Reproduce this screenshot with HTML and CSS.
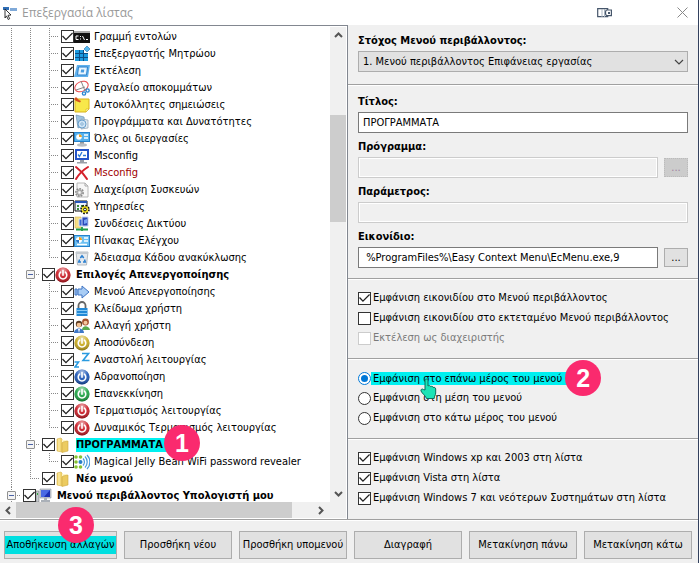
FILE: index.html
```html
<!DOCTYPE html>
<html lang="el">
  <head>
    <meta charset="UTF-8" />
    <meta name="viewport" content="width=device-width, initial-scale=1.0" />
    <title>Επεξεργασία λίστας</title>
    <link rel="stylesheet" href="styles.css">
  </head>
  <body>
    <!-- shared icons -->
    <svg class="defs" width="0" height="0">
      <defs>
        <radialGradient id="shine" cx="50%" cy="20%" r="80%">
          <stop offset="0" stop-color="#fff" stop-opacity="0.65" />
          <stop offset="0.5" stop-color="#fff" stop-opacity="0.1" />
          <stop offset="1" stop-color="#000" stop-opacity="0.35" />
        </radialGradient>
        <symbol id="power" viewBox="0 0 16 16">
          <circle cx="8" cy="8" r="7.6" fill="currentColor" />
          <circle cx="8" cy="8" r="7.6" fill="url(#shine)" />
          <path d="M5.6 5.2a3.8 3.8 0 1 0 4.8 0M8 3.6v4.6" fill="none" stroke="#fff" stroke-width="1.6" stroke-linecap="round" />
        </symbol>
        <symbol id="folder" viewBox="0 0 16 16">
          <path d="M2 2l4-1 1 1v13l-5-1z" fill="#f3d673" stroke="#d9b44a" stroke-width="0.6" />
          <path d="M7 3h5v11H7z" fill="#fff6c8" />
          <path d="M8 5l5-1v10l-6 1.5V6z" fill="#eccb60" stroke="#cfa940" stroke-width="0.6" />
          <path d="M4 2v12" stroke="#fbeeb0" />
        </symbol>
      </defs>
    </svg>

    <div class="window">
      <header class="titlebar">
        <svg width="16" height="16" viewBox="0 0 16 16">
          <path d="M1 2h6v3H1z" fill="#2f6db5" />
          <path d="M8 3h7v3H8z" fill="#7fa9d8" />
          <path d="M3 4l6 6-3 .3 1.7 3.4-1.5.8-1.7-3.6L3 13z" fill="#fff" stroke="#222" stroke-width="0.9" />
        </svg>
        <h1>Επεξεργασία λίστας</h1>
        <svg class="dock" width="16" height="10" viewBox="0 0 16 10">
          <path d="M.7.7h10v8H.7z" fill="#fff" stroke="#46566b" stroke-width="1.2" />
          <path d="M5 1v8M7.5 1v8" stroke="#a9b4c0" />
          <path d="M10 2h4.4v5.6H10c-2 0-2-5.6 0-5.6z" fill="#fff" stroke="#46566b" stroke-width="1.2" />
          <path d="M11 4h2v2h-2z" fill="#46566b" />
        </svg>
        <button class="close" aria-label="Κλείσιμο">
          <svg width="11" height="11" viewBox="0 0 11 11"><path d="M.5.5l10 10M10.5.5l-10 10" stroke="#888" /></svg>
        </button>
      </header>

      <main class="content">
        <section class="tree-pane">
          <div class="tree-view">
            <ul class="tree">
              <li class="hidden-row">
                <ul>
                  <li class="hidden-row">
                    <ul>
                      <li><label class="row"><input type="checkbox" checked />
                        <svg viewBox="0 0 16 16"><path d="M0 2h16v12H0z" fill="#111" /><path d="M0 2h16v2H0z" fill="#aaa" /><path d="M4.5 7H2v3.500h2.500M6.500 7v1M6.500 9.500v1M8.500 7l2 4M12 10.500h2" fill="none" stroke="#fff" /></svg>
                        <span>Γραμμή εντολών</span></label></li>
                      <li><label class="row"><input type="checkbox" checked />
                        <svg viewBox="0 0 16 16"><path d="M1 4h9v3h4v8H1z" fill="#1d9be0" /><path d="M1 7.500h13M1 11.500h13M5.500 4v11M9.500 4v11" stroke="#0b4f86" /><path d="M13 0l3 3-3 3-3-3z" fill="#58b9ee" stroke="#1a6fb0" stroke-width="0.6" /></svg>
                        <span>Επεξεργαστής Μητρώου</span></label></li>
                      <li><label class="row"><input type="checkbox" checked />
                        <svg viewBox="0 0 16 16"><path d="M3 2h13l-2 12H0z" fill="#5fb0ec" /><path d="M4.500 4h9l-1 8h-9z" fill="#d9efff" stroke="#2e82cc" /><path d="M6.500 6h4.500l-.5 4H6z" fill="#4a9de0" stroke="#fff" /></svg>
                        <span>Εκτέλεση</span></label></li>
                      <li><label class="row"><input type="checkbox" checked />
                        <svg viewBox="0 0 16 16"><ellipse cx="7.500" cy="6.500" rx="7" ry="4.800" transform="rotate(-25 7.500 6.500)" fill="#fff" stroke="#e8474a" /><path d="M7 1l4 10M2 10l9-3" stroke="#888" /><circle cx="10" cy="13.500" r="1.600" fill="none" stroke="#2a86d0" stroke-width="1.400" /><circle cx="13.600" cy="10.500" r="1.600" fill="none" stroke="#2a86d0" stroke-width="1.400" /></svg>
                        <span>Εργαλείο αποκομμάτων</span></label></li>
                      <li><label class="row"><input type="checkbox" checked />
                        <svg viewBox="0 0 16 16"><path d="M1 2h14v10l-3 3H1z" fill="#f8e84a" stroke="#d8b21c" /><path d="M15 12h-3v3z" fill="#fffbc0" stroke="#d8b21c" stroke-width="0.600" /><path d="M2 0l3 3 2 1-1 1.500L2 4 0 2z" fill="#d4501e" /></svg>
                        <span>Αυτοκόλλητες σημειώσεις</span></label></li>
                      <li><label class="row"><input type="checkbox" checked />
                        <svg viewBox="0 0 16 16"><path d="M2 1l8 2 1 8-7 3z" fill="#9fc4e2" stroke="#6f93b0" stroke-width="0.700" /><path d="M7 5l7 1v8l-7 1z" fill="#e3ebf2" stroke="#8b9fb2" stroke-width="0.700" /><circle cx="8" cy="10" r="4" fill="#cfe4f5" stroke="#4f8ec2" stroke-width="0.800" /><circle cx="8" cy="10" r="1.200" fill="#fff" stroke="#4f8ec2" stroke-width="0.700" /></svg>
                        <span>Προγράμματα και Δυνατότητες</span></label></li>
                      <li><label class="row"><input type="checkbox" checked />
                        <svg viewBox="0 0 16 16"><path d="M0 1h16v10H0z" fill="#2582cc" /><path d="M1 2h14v8H1z" fill="#55b1ec" /><circle cx="5" cy="6" r="2.800" fill="#fff" /><path d="M5 6V3.200A2.800 2.800 0 0 1 7.800 6z" fill="#f0a020" /><path d="M10 4h4M10 7h4" stroke="#fff" stroke-width="1.500" /><path d="M6 11h4v2H6z" fill="#999" /><ellipse cx="8" cy="14" rx="5" ry="1.700" fill="#b8bec4" /></svg>
                        <span>Όλες οι διεργασίες</span></label></li>
                      <li><label class="row"><input type="checkbox" checked />
                        <svg viewBox="0 0 16 16"><path d="M1 1h14v11H1z" fill="#2453c8" /><path d="M3 3h10v7H3z" fill="#fff" /><path d="M4 6.500l1.500 2L8 4M9 7.500h3" fill="none" stroke="#2a78d8" stroke-width="1.300" /><path d="M6 12h4v2h3v1.500H3V14h3z" fill="#9aa0a8" /></svg>
                        <span>Msconfig</span></label></li>
                      <li><label class="row"><input type="checkbox" checked />
                        <svg viewBox="0 0 16 16"><path d="M2 2c4 3 8 7 11 12M14 2C9 5 5 9 2 14" fill="none" stroke="#d4202a" stroke-width="2" stroke-linecap="round" /></svg>
                        <span class="missing">Msconfig</span></label></li>
                      <li><label class="row"><input type="checkbox" checked />
                        <svg viewBox="0 0 16 16"><path d="M3 1h8l3 3v11H3z" fill="#f7f7f7" stroke="#a8a8a8" stroke-width="0.800" /><path d="M11 1v3h3" fill="none" stroke="#a8a8a8" /><circle cx="5.500" cy="10.500" r="3.700" fill="#ddd" stroke="#8c8c8c" stroke-width="1.600" stroke-dasharray="1.700 1.100" /><circle cx="5.500" cy="10.500" r="2.500" fill="#d0d0d0" stroke="#888" stroke-width="0.700" /><circle cx="5.500" cy="10.500" r="1" fill="#fff" /></svg>
                        <span>Διαχείριση Συσκευών</span></label></li>
                      <li><label class="row"><input type="checkbox" checked />
                        <svg viewBox="0 0 16 16"><path d="M1 2h12v10H1z" fill="#eef4ff" stroke="#111" /><path d="M1 2h12v2H1z" fill="#2554b8" /><path d="M3 6h2v2H3zM7 6h2v2H7zM3 9h2v2H3z" fill="#3a8b3a" /><circle cx="11" cy="10.500" r="3.600" fill="#f2e322" stroke="#111" stroke-width="2.400" stroke-dasharray="1.600 1.200" /><circle cx="11" cy="10.500" r="3.200" fill="#f2e322" /><circle cx="11" cy="10.500" r="1.400" fill="#fff" stroke="#111" /></svg>
                        <span>Υπηρεσίες</span></label></li>
                      <li><label class="row"><input type="checkbox" checked />
                        <svg viewBox="0 0 16 16"><path d="M1 1h6v11H1z" fill="#f5df86" stroke="#d6b64a" stroke-width="0.600" /><path d="M5 3h7v7H5z" fill="#3966d6" stroke="#d8e2f4" /><path d="M8 1h6v9H8z" fill="#2b49b8" stroke="#c6d3ee" /><path d="M10 4l3-1v4l-3 1z" fill="#7aa4f4" /><path d="M2 13.500h12M8 11v4" stroke="#1e9e4a" stroke-width="1.800" /></svg>
                        <span>Συνδέσεις Δικτύου</span></label></li>
                      <li><label class="row"><input type="checkbox" checked />
                        <svg viewBox="0 0 16 16"><path d="M0 2h16v12H0z" fill="#2582cc" /><path d="M1 3h14v10H1z" fill="#6cc0f2" /><circle cx="5" cy="7" r="3" fill="#fff" /><path d="M5 7V4a3 3 0 0 1 3 3z" fill="#f0a020" /><path d="M5 7H2a3 3 0 0 0 3 3z" fill="#2c78c8" /><path d="M10 5h4M10 8h4M3 11.500h10" stroke="#fff" stroke-width="1.300" /></svg>
                        <span>Πίνακας Ελέγχου</span></label></li>
                      <li><label class="row"><input type="checkbox" checked />
                        <svg viewBox="0 0 16 16"><path d="M2 2h12l-1.500 13h-9z" fill="#e6eaee" stroke="#a6adb4" stroke-width="0.800" /><path d="M2 2h12v2H2z" fill="#c3c9cf" /><path d="M6.300 8L8 5.800 9.800 8M10.500 9.500l.8 2.500H9M7 12H4.700l.9-2.500" fill="none" stroke="#2a7fd0" stroke-width="1.500" /></svg>
                        <span>Άδειασμα Κάδου ανακύκλωσης</span></label></li>
                    </ul>
                  </li>
                  <li>
                    <div class="row"><button class="expander" aria-label="Σύμπτυξη"></button>
                      <label><input type="checkbox" checked /><svg class="red"><use href="#power" /></svg><b>Επιλογές Απενεργοποίησης</b></label></div>
                    <ul>
                      <li><label class="row"><input type="checkbox" checked />
                        <svg viewBox="0 0 16 16"><path d="M1 5h2v6H1zM4 5h4V2l7 6-7 6v-3H4z" fill="#a9cdf5" stroke="#3f74c4" /></svg>
                        <span>Μενού Απενεργοποίησης</span></label></li>
                      <li><label class="row"><input type="checkbox" checked />
                        <svg viewBox="0 0 16 16"><path d="M4.500 8V4.500a3.500 3.500 0 0 1 7 0V8" fill="none" stroke="#666" stroke-width="1.800" /><path d="M2.500 7h11v8h-11z" fill="#2389d6" /><path d="M3 9.500h10M3 12.500h10" stroke="#8acbf4" /></svg>
                        <span>Κλείδωμα χρήστη</span></label></li>
                      <li><label class="row"><input type="checkbox" checked />
                        <svg viewBox="0 0 16 16"><circle cx="11.500" cy="4" r="3.400" fill="#a5522c" /><circle cx="11.500" cy="4.800" r="2" fill="#f4c9a0" /><path d="M8 12c0-5 7-5 8 0z" fill="#58ab4e" /><circle cx="5" cy="6" r="3.200" fill="#5a3c24" /><circle cx="5" cy="7" r="2.300" fill="#f2c294" /><path d="M0 15c0-6 10-6 10 0z" fill="#3f78c8" /><path d="M4 11h2l-1 4z" fill="#fff" /></svg>
                        <span>Αλλαγή χρήστη</span></label></li>
                      <li><label class="row"><input type="checkbox" checked /><svg class="gold"><use href="#power" /></svg><span>Αποσύνδεση</span></label></li>
                      <li><label class="row"><input type="checkbox" checked />
                        <svg viewBox="0 0 16 16"><path d="M8 1.500h6.500L9 8.500h6.500M.5 10h4l-3.500 5h4" fill="none" stroke="#2a9be0" stroke-width="1.600" /></svg>
                        <span>Αναστολή λειτουργίας</span></label></li>
                      <li><label class="row"><input type="checkbox" checked /><svg class="blue"><use href="#power" /></svg><span>Αδρανοποίηση</span></label></li>
                      <li><label class="row"><input type="checkbox" checked /><svg class="green"><use href="#power" /></svg><span>Επανεκκίνηση</span></label></li>
                      <li><label class="row"><input type="checkbox" checked /><svg class="red"><use href="#power" /></svg><span>Τερματισμός λειτουργίας</span></label></li>
                      <li><label class="row"><input type="checkbox" checked /><svg class="red"><use href="#power" /></svg><span>Δυναμικός Τερματισμός λειτουργίας</span></label></li>
                    </ul>
                  </li>
                  <li>
                    <div class="row"><button class="expander" aria-label="Σύμπτυξη"></button>
                      <label><input type="checkbox" checked /><svg><use href="#folder" /></svg><b class="selected">ΠΡΟΓΡΑΜΜΑΤΑ<span class="badge">1</span></b></label></div>
                    <ul>
                      <li><label class="row"><input type="checkbox" checked />
                        <svg viewBox="0 0 16 16"><g fill="#86c232"><circle cx="2" cy="3" r="1.800" /><circle cx="6.500" cy="3" r="1.800" /><circle cx="2" cy="8" r="1.800" /><circle cx="2" cy="13" r="1.800" /><circle cx="6.500" cy="13" r="1.800" /></g><circle cx="6.500" cy="8" r="2" fill="#2a7fc8" /><path d="M9 4.500a5 5 0 0 1 0 7M11 2.500a8 8 0 0 1 0 11M13 1a10 10 0 0 1 0 14" fill="none" stroke="#4a9bdc" stroke-width="1.200" /></svg>
                        <span>Magical Jelly Bean WiFi password revealer</span></label></li>
                    </ul>
                  </li>
                  <li>
                    <div class="row"><label><input type="checkbox" checked /><svg><use href="#folder" /></svg><b>Νέο μενού</b></label></div>
                  </li>
                </ul>
              </li>
              <li>
                <div class="row"><button class="expander" aria-label="Σύμπτυξη"></button>
                  <label><input type="checkbox" checked />
                    <svg viewBox="0 0 16 16"><path d="M0 3h3v11H0z" fill="#c6cbd0" stroke="#777" stroke-width="0.600" /><path d="M1 6h1" stroke="#2fae3f" stroke-width="2" /><path d="M4 1h11v9H4z" fill="#c9ced6" stroke="#8990a0" stroke-width="0.600" /><path d="M5 2h9v7H5z" fill="#1b2fb4" /><path d="M5 2h9L8 9H5z" fill="#4a6ae4" /><path d="M8 10h3v2h3v2H5v-2h3z" fill="#aab0b8" /></svg>
                    <b>Μενού περιβάλλοντος Υπολογιστή μου</b></label></div>
              </li>
            </ul>
            <div class="scroll vertical">
              <button aria-label="Επάνω"><svg width="9" height="6" viewBox="0 0 9 6"><path d="M1 5l3.500-3.500L8 5" /></svg></button>
              <div class="track"><div class="thumb"></div></div>
              <button aria-label="Κάτω"><svg width="9" height="6" viewBox="0 0 9 6"><path d="M1 1l3.500 3.500L8 1" /></svg></button>
            </div>
          </div>
          <div class="scroll horizontal">
            <button aria-label="Αριστερά"><svg width="6" height="9" viewBox="0 0 6 9"><path d="M5 1L1.500 4.500 5 8" /></svg></button>
            <div class="track"><div class="thumb"></div></div>
            <button aria-label="Δεξιά"><svg width="6" height="9" viewBox="0 0 6 9"><path d="M1 1l3.500 3.500L1 8" /></svg></button>
          </div>
        </section>

        <form class="details">
          <div class="group target">
            <label class="caption" for="target">Στόχος Μενού περιβάλλοντος:</label>
            <div class="select">
              <select id="target"><option>1. Μενού περιβάλλοντος Επιφάνειας εργασίας</option></select>
              <svg width="10" height="6" viewBox="0 0 10 6"><path d="M1 1l4 4 4-4" fill="none" stroke="#444" stroke-width="1.200" /></svg>
            </div>
          </div>
          <div class="group fields">
            <div>
              <label class="caption" for="title">Τίτλος:</label>
              <div class="field"><input type="text" id="title" value="ΠΡΟΓΡΑΜΜΑΤΑ" /></div>
            </div>
            <div>
              <label class="caption" for="program">Πρόγραμμα:</label>
              <div class="field"><input type="text" id="program" disabled /><button type="button" disabled>...</button></div>
            </div>
            <div>
              <label class="caption" for="parameter">Παράμετρος:</label>
              <div class="field"><input type="text" id="parameter" disabled /></div>
            </div>
            <div>
              <label class="caption" for="icon">Εικονίδιο:</label>
              <div class="field"><input type="text" id="icon" value=" %ProgramFiles%\Easy Context Menu\EcMenu.exe,9" /><button type="button">...</button></div>
            </div>
          </div>
          <div class="group options">
            <label><input type="checkbox" checked />Εμφάνιση εικονιδίου στο Μενού περιβάλλοντος</label>
            <label><input type="checkbox" />Εμφάνιση εικονιδίου στο εκτεταμένο Μενού περιβάλλοντος</label>
            <label class="disabled"><input type="checkbox" disabled />Εκτέλεση ως διαχειριστής</label>
          </div>
          <div class="group options">
            <label class="marked"><input type="radio" name="position" checked /><span class="highlight">Εμφάνιση στο επάνω μέρος του μενού<span class="badge">2</span></span>
              <svg class="hand" width="17" height="22" viewBox="0 0 17 22"><path d="M5 12V2.500C5 .5 8 .5 8 2.500V8c1-.8 2.500-.4 2.700.6 1-.6 2.300-.2 2.500.9 1-.4 2.500 0 2.500 1.500V15c0 2-1.500 3-1.500 5.500H6.500C6 18 2 15.500 1 13c-.6-1.600 1.200-2.600 2.400-1.500z" fill="#1be3b6" stroke="#0b6b5c" /></svg>
            </label>
            <label><input type="radio" name="position" />Εμφάνιση στη μέση του μενού</label>
            <label><input type="radio" name="position" />Εμφάνιση στο κάτω μέρος του μενού</label>
          </div>
          <div class="group options">
            <label><input type="checkbox" checked />Εμφάνιση Windows xp και 2003 στη λίστα</label>
            <label><input type="checkbox" checked />Εμφάνιση Vista στη λίστα</label>
            <label><input type="checkbox" checked />Εμφάνιση Windows 7 και νεότερων Συστημάτων στη λίστα</label>
          </div>
        </form>
      </main>

      <footer class="actions">
        <button class="save"><span class="highlight">Αποθήκευση αλλαγών</span><span class="badge">3</span></button>
        <button>Προσθήκη νέου</button>
        <button>Προσθήκη υπομενού</button>
        <button>Διαγραφή</button>
        <button>Μετακίνηση πάνω</button>
        <button>Μετακίνηση κάτω</button>
      </footer>
    </div>
  </body>
</html>
```
FILE: styles.css
```css
* {
  box-sizing: border-box;
}
body {
  margin: 0;
  background-color: #f0f0f0;
  color: #000;
  font-family: Tahoma, "DejaVu Sans Condensed", "Noto Sans", sans-serif;
  font-size: 11px;
  line-height: 14px;
}
button,
input,
select {
  font: inherit;
  color: inherit;
}
button {
  padding: 0;
}
ul {
  list-style: none;
  margin: 0;
  padding: 0;
}
.defs {
  position: absolute;
}
.window {
  display: flex;
  flex-direction: column;
  min-height: 100vh;
  border-right: 1px solid #33415e;
}

/* title bar */
.titlebar {
  display: flex;
  align-items: center;
  height: 25px;
  padding: 0 10px 0 2px;
  background-color: #fff;
}
.titlebar h1 {
  flex: 1;
  margin: 0 0 0 4px;
  color: #999;
  font-family: "Segoe UI", "Open Sans", sans-serif;
  font-size: 12px;
  font-weight: normal;
}
.dock {
  margin-right: 64px;
}
.close {
  display: flex;
  border: none;
  background: none;
}

.content {
  display: grid;
  grid-template-columns: 348fr 350fr;
  border-bottom: 1px solid #a0a0a0;
}

/* tree */
.tree-pane {
  display: flex;
  flex-direction: column;
  min-width: 0;
  padding: 1px 1px 1px 0;
  border-top: 1px solid #828790;
  border-right: 1px solid #828790;
  background-color: #fff;
}
.tree-view {
  display: flex;
  flex: 1;
}
.tree {
  flex: 1;
  min-width: 0;
  margin-bottom: -2px;
  padding: 1px 0 0 2px;
}
.tree li {
  padding-left: 19px;
  background-image:
    repeating-linear-gradient(to bottom, #888 0 1px, transparent 1px 2px),
    repeating-linear-gradient(to right, #888 0 1px, transparent 1px 2px);
  background-position: 9px 0, 9px 8px;
  background-size: 1px 100%, 10px 1px;
  background-repeat: no-repeat;
}
.tree li li:last-child {
  background-size: 1px 9px, 10px 1px;
}
.tree .hidden-row {
  background-size: 1px 100%, 0 0;
}
.row,
.row label {
  display: flex;
  align-items: center;
  height: 17px;
  white-space: nowrap;
}
.row input {
  margin: 0 0 0 2px;
}
.row svg {
  flex: none;
  width: 16px;
  height: 16px;
}
.row span {
  margin-left: 4px;
}
.row b {
  margin-left: 5px;
}
.expander {
  width: 9px;
  height: 9px;
  margin: 0 5px 0 -14px;
  border: 1px solid #919191;
  border-radius: 1px;
  background: linear-gradient(#4b63a7, #4b63a7) center / 5px 1px no-repeat #f4f4f4;
}
.missing {
  color: #a00000;
}
.red {
  color: #c8141e;
}
.gold {
  color: #c8a818;
}
.blue {
  color: #1450b4;
}
.green {
  color: #14a03c;
}
.row .selected {
  position: relative;
  padding-right: 8px;
  background-color: #00f0f0;
}

/* scroll bars */
.scroll {
  display: flex;
  background-color: #f0f0f0;
}
.scroll button {
  display: flex;
  flex: none;
  align-items: center;
  justify-content: center;
  width: 16px;
  height: 16px;
  border: none;
  background: none;
}
.scroll path {
  fill: none;
  stroke: #555;
  stroke-width: 2;
}
.track {
  display: flex;
  flex: 1;
}
.thumb {
  background-color: #cdcdcd;
}
.vertical {
  flex-direction: column;
  width: 16px;
}
.vertical .track {
  flex-direction: column;
  justify-content: center;
}
.vertical .thumb {
  height: 24%;
  margin-bottom: 192px;
}
.horizontal {
  position: relative;
  padding-right: 17px;
}
.horizontal .thumb {
  width: 93%;
}

/* right side */
.group {
  padding: 8px 10px 10px;
  border-top: 1px solid #fff;
  border-bottom: 1px solid #a0a0a0;
}
.group:first-child {
  border-top: none;
}
.group:last-child {
  border-bottom: none;
}
.target {
  padding-top: 9px;
  padding-bottom: 12px;
}
.caption {
  display: block;
  margin-bottom: 3px;
  font-weight: bold;
}
.select {
  display: grid;
  align-items: center;
}
.select select,
.select svg {
  grid-area: 1 / 1;
}
.select svg {
  justify-self: end;
  margin-right: 4px;
  pointer-events: none;
}
select {
  appearance: none;
  height: 21px;
  padding: 0 4px;
  border: 1px solid #adadad;
  border-radius: 0;
  background-color: #e1e1e1;
}
.fields {
  display: grid;
  gap: 7px;
  padding-top: 9px;
}
.field {
  display: flex;
  align-items: center;
  gap: 6px;
}
.field input {
  flex: 1;
  min-width: 0;
  height: 21px;
  padding: 0 4px;
  border: 1px solid #7a7a7a;
  background-color: #fff;
}
.field input:disabled {
  border-color: #ccc;
  background-color: #f0f0f0;
  box-shadow: inset 0 0 0 1px #fff;
}
.field button {
  width: 24px;
  height: 19px;
  border: 1px solid #adadad;
  background-color: #e1e1e1;
}
.field button:disabled {
  border: 1px dotted #bbb;
  background-color: #ccc;
  color: #a080a0;
}
.options label {
  display: flex;
  align-items: center;
  gap: 2px;
  height: 20px;
  white-space: nowrap;
}
.options .disabled {
  color: #7a7a7a;
}
.options .marked {
  position: relative;
  gap: 0;
}

/* check boxes and radio buttons */
input[type="checkbox"],
input[type="radio"] {
  appearance: none;
  flex: none;
  display: grid;
  place-items: center;
  width: 13px;
  height: 13px;
  border: 1px solid #333;
  background-color: #fff;
}
.options input[type="checkbox"],
.options input[type="radio"] {
  margin: 0;
}
.options input[type="checkbox"]:disabled {
  border-color: #ccc;
}
input[type="checkbox"]:checked::before {
  content: "";
  width: 11px;
  height: 11px;
  background-color: #222;
  clip-path: polygon(0 50%, 9% 42%, 36% 70%, 92% 14%, 100% 22%, 36% 86%);
}
input[type="radio"] {
  border-radius: 50%;
}
input[type="radio"]:checked {
  border-color: #0078d7;
}
input[type="radio"]:checked::before {
  content: "";
  width: 7px;
  height: 7px;
  border-radius: 50%;
  background-color: #0078d7;
}

.highlight {
  background-color: #00f0f0;
}
.marked .highlight {
  position: relative;
  padding: 0 8px 0 2px;
  line-height: 13px;
}
.badge {
  position: absolute;
  z-index: 1;
  width: 36px;
  height: 36px;
  border-radius: 50%;
  background-color: #fa2a6e;
  color: #fff;
  font-family: "Liberation Sans", Arial, sans-serif;
  font-size: 25px;
  font-weight: bold;
  line-height: 36px;
  text-align: center;
}
.marked .badge {
  top: -12px;
  right: -31px;
}
.selected .badge {
  top: -13px;
  right: -29px;
}
.hand {
  position: absolute;
  top: 10px;
  left: 62px;
  z-index: 1;
}

/* bottom buttons */
.actions {
  display: grid;
  grid-template-columns: 113fr repeat(5, 108fr);
  gap: 7px;
  padding: 10px 6px 4px 4px;
  border-top: 1px solid #fff;
}
.actions button {
  height: 28px;
  border: 1px solid #adadad;
  background-color: #e1e1e1;
  white-space: nowrap;
}
.actions .save {
  position: relative;
  overflow: visible;
}
.save .highlight {
  display: block;
  padding: 2px 0;
  background-color: #00dfe0;
}
.save .badge {
  top: -25px;
  left: 53px;
}
```
